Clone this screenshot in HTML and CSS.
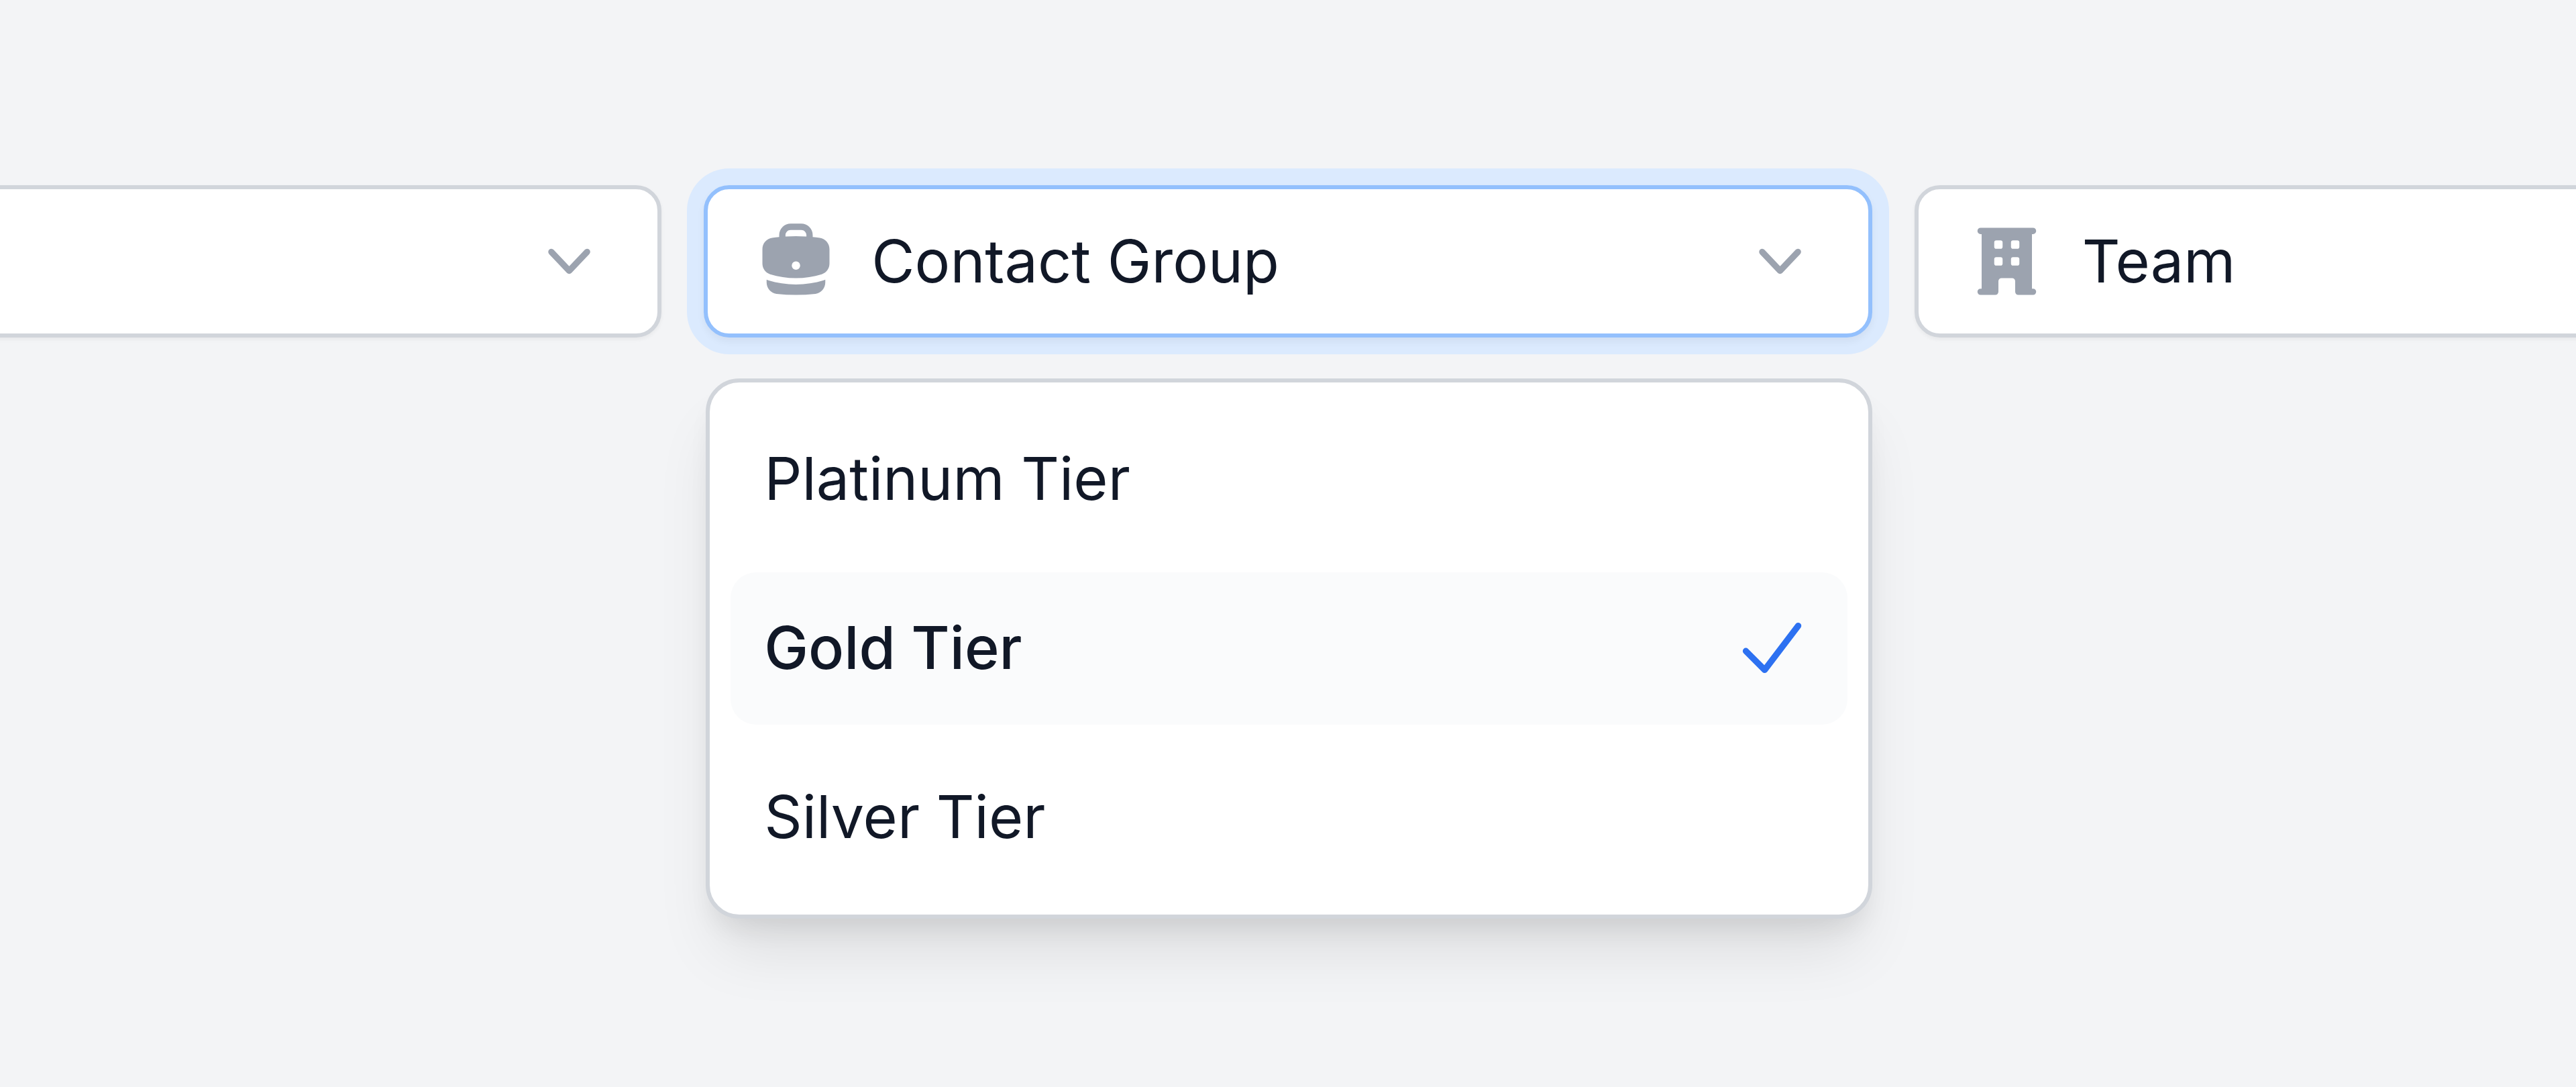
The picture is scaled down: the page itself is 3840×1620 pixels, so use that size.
FILE: index.html
```html
<!DOCTYPE html>
<html lang="en">
<head>
    <meta charset="UTF-8">
    <meta name="viewport" content="width=device-width, initial-scale=1.0">
    <title>Contact Filters</title>
    <link rel="stylesheet" href="styles.css">
</head>
<body>
    <form class="filters">
        <div class="filter">
            <div class="field">
                <select id="owner" name="owner" aria-label="Owner">
                    <option></option>
                </select>
                <svg class="icon" viewBox="0 0 20 20" aria-hidden="true">
                    <path fill-rule="evenodd" d="M5.23 7.21a.75.75 0 011.06.02L10 11.168l3.71-3.938a.75.75 0 111.08 1.04l-4.25 4.5a.75.75 0 01-1.08 0l-4.25-4.5a.75.75 0 01.02-1.06z"/>
                </svg>
            </div>
        </div>

        <div class="filter">
            <div class="field active">
                <svg class="icon" viewBox="0 0 20 20" aria-hidden="true">
                    <path fill-rule="evenodd" d="M6 3.75A2.75 2.75 0 018.75 1h2.5A2.75 2.75 0 0114 3.75v.443c.572.055 1.14.122 1.706.2C17.053 4.582 18 5.75 18 7.07v3.469c0 1.126-.694 2.191-1.83 2.54-1.952.599-4.024.921-6.17.921s-4.219-.322-6.17-.921C2.694 12.73 2 11.665 2 10.539V7.07c0-1.321.947-2.489 2.294-2.676A41.047 41.047 0 016 4.193V3.75zm6.5 0v.325a41.622 41.622 0 00-5 0V3.75c0-.69.56-1.25 1.25-1.25h2.5c.69 0 1.25.56 1.25 1.25zM10 10a1 1 0 00-1 1v.01a1 1 0 001 1h.01a1 1 0 001-1V11a1 1 0 00-1-1H10z"/>
                    <path d="M3 15.055v-.684c.126.053.255.1.39.142 2.092.642 4.313.987 6.61.987 2.297 0 4.518-.345 6.61-.987.135-.041.264-.089.39-.142v.684c0 1.347-.985 2.53-2.363 2.686a41.454 41.454 0 01-9.274 0C3.985 17.585 3 16.402 3 15.055z"/>
                </svg>
                <select id="group" name="group" aria-label="Contact Group">
                    <option>Contact Group</option>
                </select>
                <svg class="icon" viewBox="0 0 20 20" aria-hidden="true">
                    <path fill-rule="evenodd" d="M5.23 7.21a.75.75 0 011.06.02L10 11.168l3.71-3.938a.75.75 0 111.08 1.04l-4.25 4.5a.75.75 0 01-1.08 0l-4.25-4.5a.75.75 0 01.02-1.06z"/>
                </svg>
            </div>

            <ul class="menu" role="listbox" aria-label="Contact Group">
                <li class="option" role="option" aria-selected="false">Platinum Tier</li>
                <li class="option selected" role="option" aria-selected="true">
                    Gold Tier
                    <svg class="icon check" viewBox="0 0 20 20" aria-hidden="true">
                        <path fill-rule="evenodd" d="M16.704 4.153a.75.75 0 01.143 1.052l-8 10.5a.75.75 0 01-1.127.075l-4.5-4.5a.75.75 0 011.06-1.06l3.894 3.893 7.48-9.817a.75.75 0 011.05-.143z"/>
                    </svg>
                </li>
                <li class="option" role="option" aria-selected="false">Silver Tier</li>
            </ul>
        </div>

        <div class="filter">
            <div class="field">
                <svg class="icon" viewBox="0 0 20 20" aria-hidden="true">
                    <path fill-rule="evenodd" d="M4 16.5v-13h-.25a.75.75 0 010-1.5h12.5a.75.75 0 010 1.5H16v13h.25a.75.75 0 010 1.5h-3.5a.75.75 0 01-.75-.75v-2.5a.75.75 0 00-.75-.75h-2.5a.75.75 0 00-.75.75v2.5a.75.75 0 01-.75.75h-3.5a.75.75 0 010-1.5H4zm3-11a.5.5 0 01.5-.5h1a.5.5 0 01.5.5v1a.5.5 0 01-.5.5h-1a.5.5 0 01-.5-.5v-1zM7.5 9a.5.5 0 00-.5.5v1a.5.5 0 00.5.5h1a.5.5 0 00.5-.5v-1a.5.5 0 00-.5-.5h-1zM11 5.5a.5.5 0 01.5-.5h1a.5.5 0 01.5.5v1a.5.5 0 01-.5.5h-1a.5.5 0 01-.5-.5v-1zm.5 3.5a.5.5 0 00-.5.5v1a.5.5 0 00.5.5h1a.5.5 0 00.5-.5v-1a.5.5 0 00-.5-.5h-1z"/>
                </svg>
                <select id="team" name="team" aria-label="Team">
                    <option>Team</option>
                </select>
                <svg class="icon" viewBox="0 0 20 20" aria-hidden="true">
                    <path fill-rule="evenodd" d="M5.23 7.21a.75.75 0 011.06.02L10 11.168l3.71-3.938a.75.75 0 111.08 1.04l-4.25 4.5a.75.75 0 01-1.08 0l-4.25-4.5a.75.75 0 01.02-1.06z"/>
                </svg>
            </div>
        </div>
    </form>
</body>
</html>
```
FILE: styles.css
```css
* {
    box-sizing: border-box;
}

body {
    margin: 0;
    min-height: 100vh;
    padding-top: 276px;
    overflow: hidden;
    background-color: #f3f4f6;
    color: #111827;
    font-family: Inter, "Liberation Sans", sans-serif;
    font-size: 88px;
    line-height: 125px;
}

/* the outer filters run past both edges of the window */
.filters {
    display: flex;
    gap: 63px;
    margin: 0 -755px;
}

.filter {
    position: relative;
    flex: 1;
}

.field {
    display: flex;
    align-items: center;
    gap: 50px;
    padding: 45px 69px;
    background: #fff;
    border: 6px solid #d1d5db;
    border-radius: 38px;
    box-shadow: 0 3px 6px rgba(0, 0, 0, 0.05);
}

.field.active {
    border-color: #93c0fd;
    box-shadow: 0 6px 12px rgba(0, 0, 0, 0.05), 0 0 0 25px #dbeafe;
}

.field select {
    flex: 1;
    min-width: 0;
    height: 125px;
    padding: 0 0 3px;
    border: none;
    outline: none;
    appearance: none;
    background: none;
    color: inherit;
    font: inherit;
}

.icon {
    flex: none;
    width: 125px;
    height: 125px;
    fill: #9ca3af;
}

.menu {
    position: absolute;
    top: 288px;
    left: 3px;
    right: 0;
    display: flex;
    flex-direction: column;
    gap: 25px;
    margin: 0;
    padding: 31px;
    list-style: none;
    background: #fff;
    border: 6px solid #d1d5db;
    border-radius: 50px;
    box-shadow: 0 62px 94px -19px rgba(0, 0, 0, 0.1), 0 25px 38px -12px rgba(0, 0, 0, 0.08);
}

.option {
    display: flex;
    align-items: center;
    justify-content: space-between;
    padding: 50px 50px 52px;
    border-radius: 38px;
}

.option.selected {
    background-color: #fafbfc;
    font-weight: 500;
}

.check {
    fill: #2d71f1;
}
```
